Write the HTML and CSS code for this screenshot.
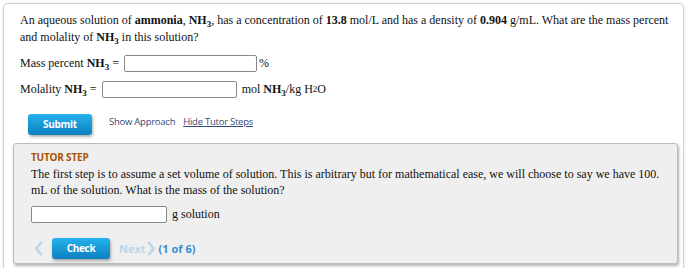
FILE: index.html
```html
<!DOCTYPE html>
<html lang="en">
<head>
    <meta charset="UTF-8">
    <title>Question</title>
    <link rel="stylesheet" href="styles.css">
</head>
<body>
<div class="card">
    <p class="question">An aqueous solution of <b>ammonia</b>, <b>NH<sub>3</sub></b>, has a concentration of <b>13.8</b> mol/L and has a density of <b>0.904</b> g/mL. What are the mass percent and molality of <b>NH<sub>3</sub></b> in this solution?</p>
    <div class="row">Mass percent <b>NH<sub>3</sub></b> = <input type="text" class="field field-mass">%</div>
    <div class="row">Molality <b>NH<sub>3</sub></b> = <input type="text" class="field field-mol"> mol <b>NH<sub>3</sub></b>/kg H<sub>2</sub>O</div>
    <div class="actions">
        <a href="javascript:;" class="btn btn-submit">Submit</a>
        <a href="javascript:;" class="link">Show Approach</a>
        <a href="javascript:;" class="link link-u">Hide Tutor Steps</a>
    </div>
    <div class="tutor">
        <div class="tutor-title">TUTOR STEP</div>
        <p class="tutor-text">The first step is to assume a set volume of solution. This is arbitrary but for mathematical ease, we will choose to say we have 100. mL of the solution. What is the mass of the solution?</p>
        <div class="row"><input type="text" class="field field-g"> g solution</div>
        <div class="nav">
            <svg class="arrow arrow-left" width="8" height="15" viewBox="0 0 8 15"><path d="M6.5 1 L1.5 7.5 L6.5 14" fill="none" stroke="#b9d6ea" stroke-width="2.6"/></svg>
            <a href="javascript:;" class="btn btn-check">Check</a>
            <span class="next">Next</span>
            <svg class="arrow arrow-right" width="8" height="15" viewBox="0 0 8 15"><path d="M1.5 1 L6.5 7.5 L1.5 14" fill="none" stroke="#b9d6ea" stroke-width="2.6"/></svg>
            <span class="count">(1 of 6)</span>
        </div>
    </div>
</div>
</body>
</html>
```

FILE: styles.css
```css
*{margin:0;padding:0;box-sizing:border-box;}
body{font-family:"Liberation Serif",serif;font-size:12px;color:#111;background:#fff;}
a{text-decoration:none;}
sub{font-size:9px;vertical-align:-3px;line-height:1;}
.card{
    margin:3px 0 0 3px;
    width:681px;
    height:300px;
    border:1px solid #d0d0d0;
    border-radius:5px;
    box-shadow:0 0 3px rgba(0,0,0,0.12);
    padding:8px 0 0 16px;
}
.question{line-height:17px;width:655px;}
.row{display:flex;align-items:center;height:17px;margin-top:9px;white-space:pre;}
.field{
    height:17px;
    border:1px solid #8a8a8a;
    border-radius:2px;
    background:#fff;
    margin:0 2px;
}
.field-mass{width:133px;}
.field-mol{width:135px;}
.field-g{width:136px;margin-left:0;}
.actions{display:flex;align-items:center;margin-top:15px;padding-left:8px;height:22px;}
.btn{
    display:inline-block;
    font-family:"Open Sans",sans-serif;
    font-weight:700;
    font-size:10px;
    color:#fff;
    text-align:center;
    border-radius:3px;
    background:linear-gradient(#25b3ec,#0d7fc0);
    box-shadow:1px 2px 3px rgba(0,0,0,0.3);
    letter-spacing:-0.3px;
}
.btn-submit{width:64px;height:21px;line-height:21px;}
.link{
    font-family:"Open Sans",sans-serif;
    font-size:9.5px;
    letter-spacing:-0.25px;
    color:#34497c;
    margin-left:17px;
    margin-top:-5px;
}
.link-u{margin-left:8px;text-decoration:underline;}
.tutor{
    margin:8px 0 0 -7px;
    width:665px;
    height:121px;
    background:#efefef;
    border:1px solid #bdbdbd;
    border-radius:3px;
    box-shadow:1px 2px 3px rgba(0,0,0,0.3);
    padding:7px 0 0 17px;
}
.tutor-title{
    font-family:"Open Sans",sans-serif;
    font-weight:700;
    font-size:10px;
    line-height:12px;
    color:#a85500;
    letter-spacing:-0.2px;
}
.tutor-text{line-height:16px;width:640px;margin-top:3px;}
.tutor .row{margin-top:8px;}
.nav{display:flex;align-items:center;margin-top:14px;height:22px;font-family:"Open Sans",sans-serif;font-weight:700;font-size:11px;}
.arrow{display:block;}
.arrow-left{margin-left:4px;}
.btn-check{width:58px;height:21px;line-height:21px;margin-left:9px;}
.next{color:#b9d6ea;margin-left:9px;}
.arrow-right{margin-left:1px;}
.count{color:#3d8ccc;margin-left:4px;}
```
